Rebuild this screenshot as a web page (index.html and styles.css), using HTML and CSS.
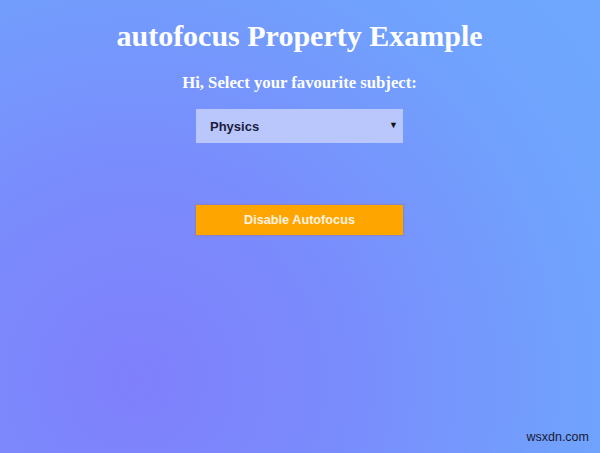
FILE: index.html
```html
<!DOCTYPE html>
<html>
<head>
<meta charset="utf-8">
<link rel="stylesheet" href="styles.css">
</head>
<body>
<main class="page">
  <h1 class="title">autofocus Property Example</h1>
  <p class="subtitle">Hi, Select your favourite subject:</p>
  <div class="select">
    <span class="select-value">Physics</span>
    <span class="select-arrow">&#9660;</span>
  </div>
  <button class="btn">Disable Autofocus</button>
</main>
<div class="watermark">wsxdn.com</div>
</body>
</html>
```

FILE: styles.css
```css
html, body {
  margin: 0;
  padding: 0;
  width: 600px;
  height: 453px;
  overflow: hidden;
}
body {
  position: relative;
  background: radial-gradient(circle at 135px 380px, #7f7ffb 0%, #7a8cfc 35%, #70a2fd 75%, #6ea8fd 100%);
  font-family: "Liberation Serif", "Times New Roman", serif;
}
.page {
  width: 599px;
  display: flex;
  flex-direction: column;
  align-items: center;
  padding-top: 19px;
}
.title {
  margin: 0;
  color: #fff;
  font-size: 30px;
  font-weight: bold;
  line-height: 34px;
}
.subtitle {
  margin: 20px 0 0;
  color: #fff;
  font-size: 16.7px;
  font-weight: bold;
  line-height: 20px;
}
.select {
  margin-top: 16px;
  width: 207px;
  height: 34px;
  box-sizing: border-box;
  background: #bac7fc;
  display: flex;
  align-items: center;
  justify-content: space-between;
  padding: 0 5px 0 14px;
  font-family: "Liberation Sans", Arial, sans-serif;
  font-weight: bold;
  font-size: 13px;
  color: #1c1c3a;
}
.select-arrow {
  font-size: 9px;
  color: #111;
  margin-top: -3px;
}
.btn {
  margin-top: 62px;
  width: 207px;
  height: 30px;
  border: none;
  background: #ffa500;
  color: #fdf3e0;
  font-family: "Liberation Sans", Arial, sans-serif;
  font-weight: bold;
  font-size: 12.7px;
  box-shadow: 0 0 1px 1px rgba(150, 120, 140, 0.45);
  padding: 0;
}
.watermark {
  position: absolute;
  right: 11px;
  bottom: 9px;
  font-family: "Liberation Sans", Arial, sans-serif;
  font-size: 12.5px;
  color: #1a1a33;
}
```
